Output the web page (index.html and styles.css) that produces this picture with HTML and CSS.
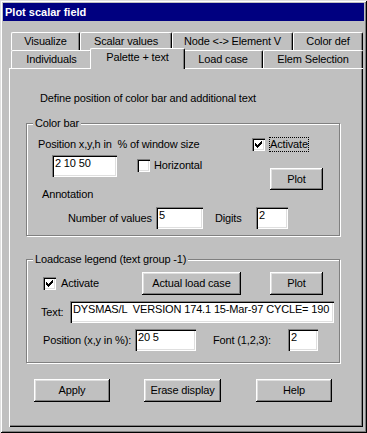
FILE: index.html
```html
<!DOCTYPE html>
<html>
<head>
<meta charset="utf-8">
<link rel="stylesheet" href="styles.css">
</head>
<body>
<div class="window">
  <div class="titlebar">Plot scalar field</div>
  <div class="tabctl">
    <div class="tabrow back">
      <div class="tab t-vis">Visualize</div>
      <div class="tab t-scal">Scalar values</div>
      <div class="tab t-node">Node &lt;-&gt; Element V</div>
      <div class="tab t-col">Color def</div>
    </div>
    <div class="tabrow front">
      <div class="tab t-ind">Individuals</div>
      <div class="tab t-pal active">Palette + text</div>
      <div class="tab t-load">Load case</div>
      <div class="tab t-elem">Elem Selection</div>
    </div>
    <div class="panel">
      <p class="intro">Define position of color bar and additional text</p>

      <fieldset class="group g1">
        <legend>Color bar</legend>
        <div class="row g1a">
          <span class="lbl-pos">Position x,y,h in  % of window size</span>
          <label class="check focus">
            <span class="cbox"><svg width="7" height="7" viewBox="0 0 7 7" shape-rendering="crispEdges"><path d="M6 0h1v1h-1z M5 1h2v1h-2z M0 2h1v1h-1z M4 2h3v1h-3z M0 3h2v1h-2z M3 3h3v1h-3z M0 4h5v1h-5z M1 5h3v1h-3z M2 6h1v1h-1z" fill="#000"/></svg></span>
            <span class="ctext">Activate</span>
          </label>
        </div>
        <div class="row g1b">
          <div class="edit e-pos">2 10 50</div>
          <label class="check c-horiz">
            <span class="cbox"></span>
            <span class="ctext">Horizontal</span>
          </label>
          <button class="btn b-plot1">Plot</button>
        </div>
        <div class="row g1c">Annotation</div>
        <div class="row g1d">
          <span class="lbl-num">Number of values</span>
          <div class="edit e-num">5</div>
          <span class="lbl-dig">Digits</span>
          <div class="edit e-dig">2</div>
        </div>
      </fieldset>

      <fieldset class="group g2">
        <legend>Loadcase legend (text group -1)</legend>
        <div class="row g2a">
          <label class="check c-act2">
            <span class="cbox"><svg width="7" height="7" viewBox="0 0 7 7" shape-rendering="crispEdges"><path d="M6 0h1v1h-1z M5 1h2v1h-2z M0 2h1v1h-1z M4 2h3v1h-3z M0 3h2v1h-2z M3 3h3v1h-3z M0 4h5v1h-5z M1 5h3v1h-3z M2 6h1v1h-1z" fill="#000"/></svg></span>
            <span class="ctext">Activate</span>
          </label>
          <button class="btn b-actual">Actual load case</button>
          <button class="btn b-plot2">Plot</button>
        </div>
        <div class="row g2b">
          <span class="lbl-text">Text:</span>
          <div class="edit e-text">DYSMAS/L  VERSION 174.1 15-Mar-97 CYCLE= 190</div>
        </div>
        <div class="row g2c">
          <span class="lbl-xy">Position (x,y in %):</span>
          <div class="edit e-xy">20 5</div>
          <span class="lbl-font">Font (1,2,3):</span>
          <div class="edit e-font">2</div>
        </div>
      </fieldset>

      <div class="buttons">
        <button class="btn b-apply">Apply</button>
        <button class="btn b-erase">Erase display</button>
        <button class="btn b-help">Help</button>
      </div>
    </div>
  </div>
</div>
</body>
</html>
```
FILE: styles.css
```css
* { box-sizing: border-box; }
body {
  margin: 0;
  background: #c0c0c0;
  font: 11px/13px "Liberation Sans", Arial, sans-serif;
  letter-spacing: -0.15px;
  color: #000;
}
.window {
  width: 367px;
  height: 433px;
  padding: 3px;
  background: #c0c0c0;
  box-shadow: inset 1px 1px #dfdfdf, inset -1px -1px #000, inset 2px 2px #fff, inset -2px -2px #808080;
}
.titlebar {
  height: 18px;
  background: #000080;
  color: #fff;
  font-weight: bold;
  line-height: 18px;
  padding-left: 2px;
  letter-spacing: 0;
}
.tabctl {
  margin: 11px 0 0 6px;
  width: 354px;
}
.tabrow {
  display: flex;
  height: 18px;
  padding-left: 2px;
}
.tab {
  height: 18px;
  flex: none;
  border-top: 1px solid #fff;
  border-left: 1px solid #fff;
  border-right: 1px solid #000;
  border-radius: 2px 2px 0 0;
  box-shadow: inset -1px 0 #808080;
  text-align: center;
  padding-top: 2px;
  white-space: nowrap;
}
.t-vis { width: 69px; }
.t-scal { width: 92px; }
.t-node { width: 121px; }
.t-col { width: 70px; }
.t-ind { width: 81px; }
.t-pal { width: 91px; }
.t-load { width: 80px; }
.t-elem { width: 100px; }
.tab.active {
  position: relative;
  z-index: 1;
  width: 95px;
  height: 21px;
  margin: -2px -2px 0 -2px;
  background: #c0c0c0;
}
.panel {
  height: 359px;
  box-shadow: inset 1px 1px #fff, inset -1px -1px #000, inset -2px -2px #808080;
  padding-top: 1px;
}
.intro {
  margin: 23px 0 0 31px;
}
.group {
  margin: 0 0 0 17px;
  width: 314px;
  padding: 0;
  min-width: 0;
  border: 1px solid #808080;
  box-shadow: inset 1px 1px #fff, 1px 1px #fff;
}
.group legend {
  margin-left: 6px;
  padding: 0 2px;
  background: #c0c0c0;
  line-height: 13px;
}
.g1 { margin-top: 12px; padding-bottom: 6px; }
.g2 { margin-top: 17px; padding-bottom: 11px; }
.row {
  display: flex;
  align-items: center;
  white-space: pre;
}
.check {
  display: flex;
  align-items: center;
}
.cbox {
  width: 13px;
  height: 13px;
  background: #fff;
  box-shadow: inset 1px 1px #808080, inset 2px 2px #000, inset -1px -1px #fff, inset -2px -2px #dfdfdf;
  display: flex;
  align-items: center;
  justify-content: center;
  flex: none;
}
.cbox svg { display: block; }
.ctext { margin-left: 5px; }
.focus .ctext { outline: 1px dotted #000; outline-offset: 0; }
.edit {
  height: 22px;
  background: #fff;
  box-shadow: inset 1px 1px #808080, inset 2px 2px #000, inset -1px -1px #fff, inset -2px -2px #dfdfdf;
  padding: 2px 3px 0;
  white-space: pre;
  align-self: flex-start;
  flex: none;
}
.btn {
  font: inherit;
  letter-spacing: inherit;
  color: #000;
  background: #c0c0c0;
  border: none;
  margin: 0;
  padding: 0;
  height: 23px;
  flex: none;
  box-shadow: inset -1px -1px #000, inset 1px 1px #fff, inset -2px -2px #808080, inset 2px 2px #dfdfdf;
}

/* Color bar group */
.g1a { margin-top: 8px; padding-left: 11px; height: 13px; }
.lbl-pos { width: 214px; }
.g1b { margin-top: 4px; padding-left: 25px; align-items: flex-start; }
.e-pos { width: 65px; }
.c-horiz { margin: 4px 0 0 20px; width: 133px; }
.c-horiz .ctext { margin-left: 4px; }
.b-plot1 { width: 53px; margin-top: 13px; height: 22px; }
.g1c { margin-top: -2px; padding-left: 15px; }
.g1d { margin-top: 6px; padding-left: 41px; }
.lbl-num { width: 88px; }
.e-num { width: 47px; align-self: auto; }
.lbl-dig { width: 41px; margin-left: 12px; }
.e-dig { width: 32px; align-self: auto; }

/* Loadcase group */
.g2a { margin-top: 6px; padding-left: 16px; }
.c-act2 { width: 99px; }
.b-actual { width: 99px; }
.b-plot2 { width: 53px; margin-left: 29px; }
.g2b { margin-top: 6px; padding-left: 14px; }
.lbl-text { width: 29px; }
.e-text { width: 264px; align-self: auto; }
.g2c { margin-top: 6px; padding-left: 16px; }
.lbl-xy { width: 92px; }
.e-xy { width: 61px; align-self: auto; }
.lbl-font { width: 75px; margin-left: 17px; }
.e-font { width: 30px; align-self: auto; }

.buttons {
  display: flex;
  margin: 16px 0 0 25px;
}
.b-apply { width: 76px; }
.b-erase { width: 77px; margin-left: 34px; }
.b-help { width: 76px; margin-left: 35px; }
```
